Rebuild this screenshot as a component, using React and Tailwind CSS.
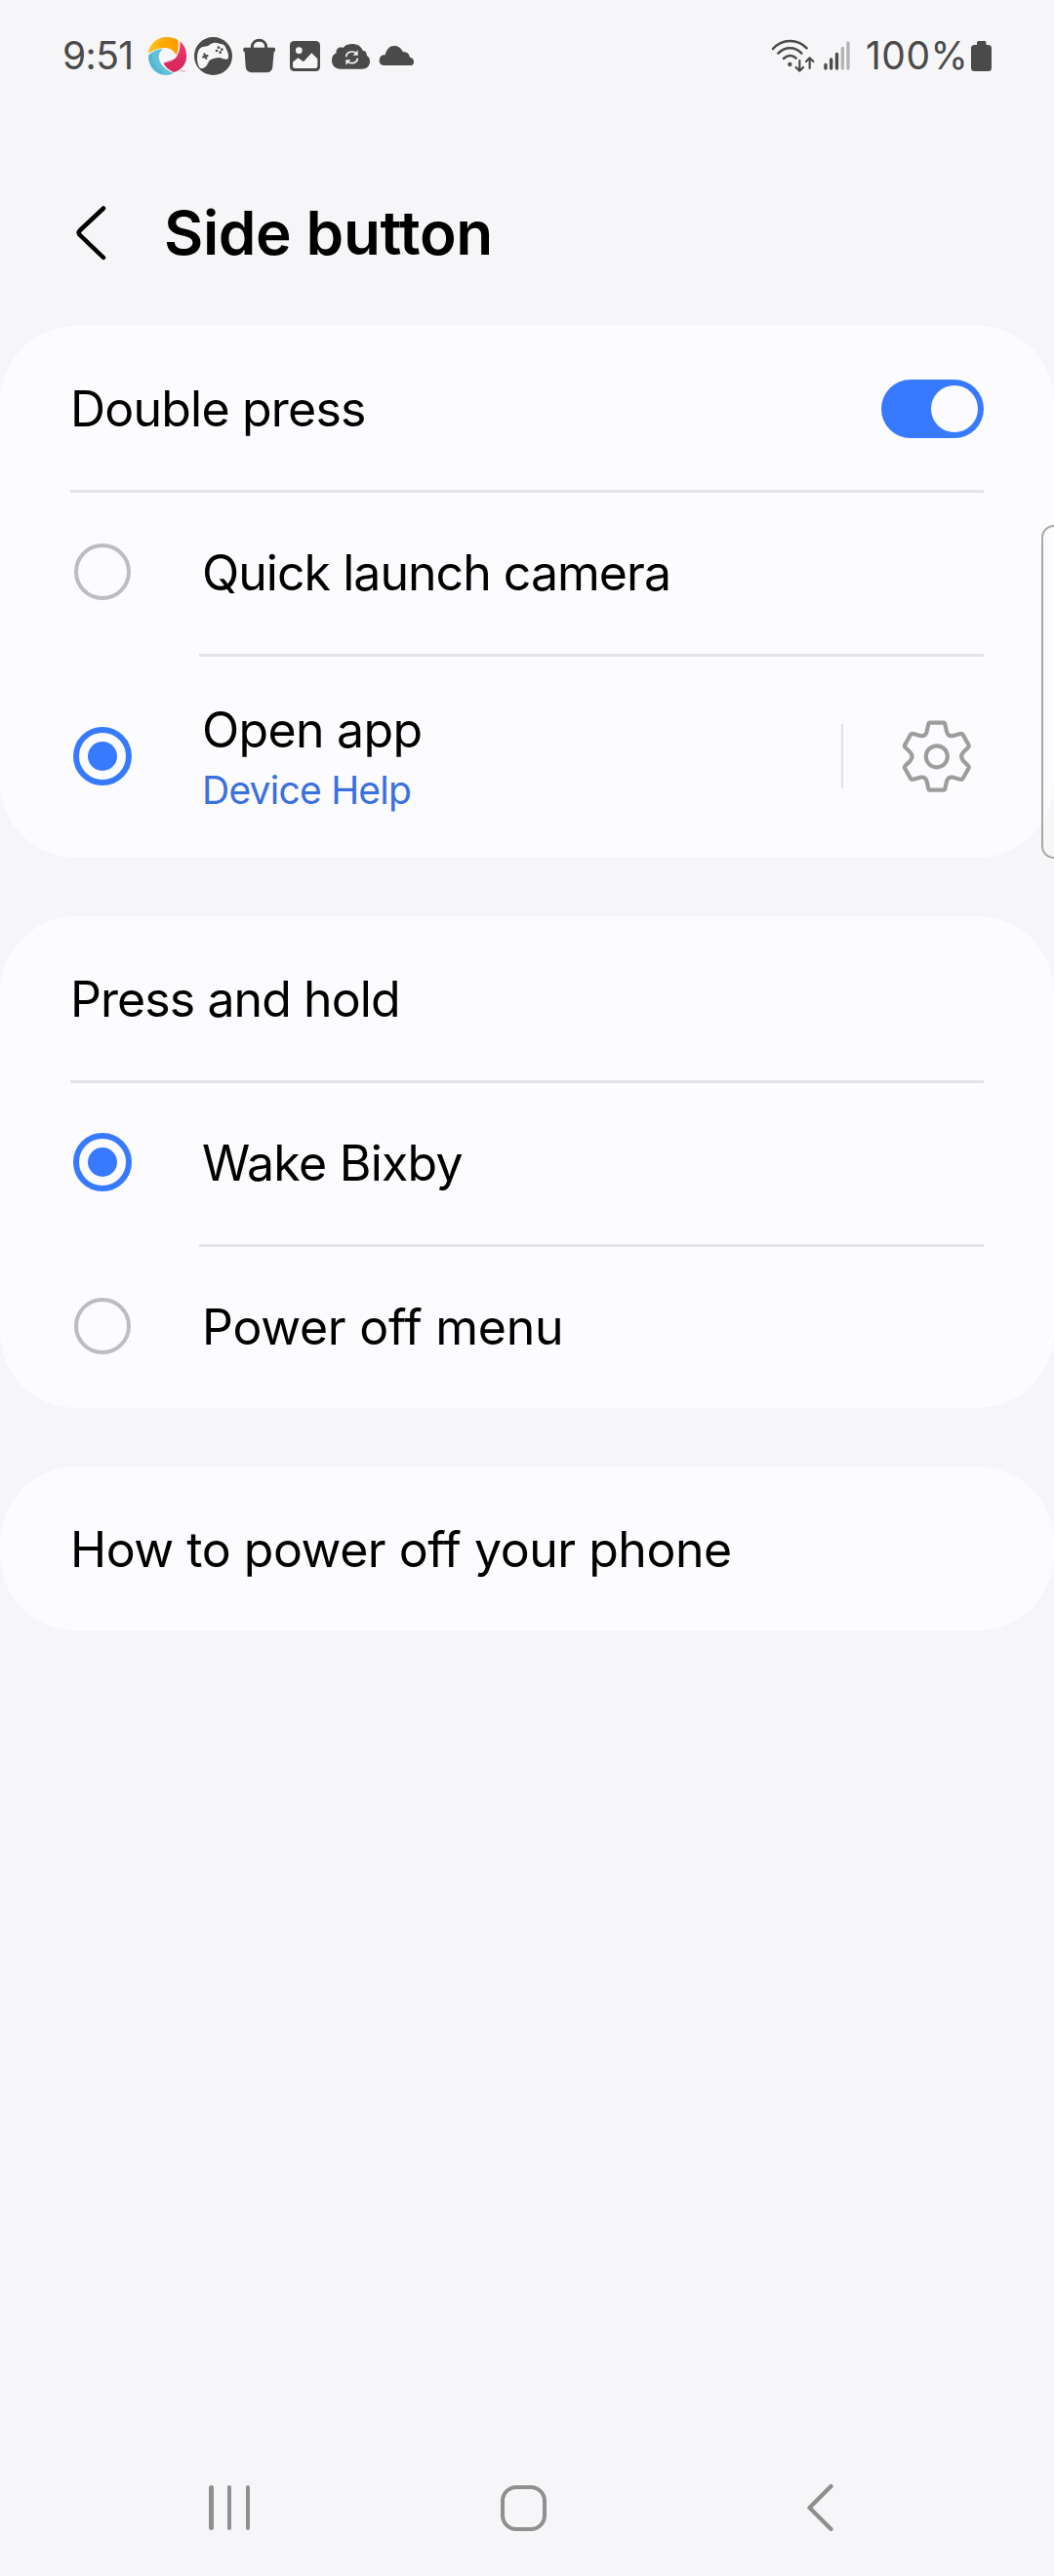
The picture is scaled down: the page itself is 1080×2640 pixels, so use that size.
import React from "react";

function SwirlLogo() {
  return (
    <svg className="ml-[17px] h-[39px] w-[39px] shrink-0" viewBox="306 54 117 117">
      <defs>
        <linearGradient id="amber" x1="0" x2="1">
          <stop offset="0.2" stopColor="#fcbc14" />
          <stop offset="1" stopColor="#fb9400" />
        </linearGradient>
        <linearGradient id="rose" x1="0" y1="0" x2="0.2" y2="1">
          <stop offset="0.2" stopColor="#f2386f" />
          <stop offset="1" stopColor="#d62a5c" />
        </linearGradient>
      </defs>
      <path d="M306 104 C309 74 334 54 362 54 C376 54 388 57 397 63 C400 78 398 95 392 109 C385 95 372 87 357 87 C340 88 322 93 306 104 Z" fill="url(#amber)" />
      <path d="M330 76 C350 66 376 68 396 84 C396 94 394 102 392 109 C385 95 372 87 357 87 C346 88 338 84 330 76 Z" fill="#ffa400" opacity="0.55" />
      <path d="M403 67 C417 78 424 95 423 115 C422 138 407 156 385 162 C371 156 358 146 353 134 C370 132 386 126 394 112 C401 101 405 84 403 67 Z" fill="url(#rose)" />
      <path d="M353 134 C372 122 388 124 423 112 C424 138 407 156 385 162 C371 156 358 146 353 134 Z" fill="#d8285c" opacity="0.4" />
      <path d="M306 112 C318 98 334 91 351 91 C339 99 335 114 341 128 C348 144 364 157 384 165 C378 169 369 171 361 171 C330 170 307 145 306 112 Z" fill="#62c1da" />
      <path d="M318 102 C316 130 330 150 352 162 C352 166 350 169 348 170 C322 164 306 142 306 112 Z" fill="#46b0cd" opacity="0.6" />
      <path d="M405 157 h5 M413 157 l2 4 l2 -4" stroke="#f2386f" strokeWidth="2" fill="none" />
    </svg>
  );
}

function GameIcon() {
  return (
    <svg className="ml-[8px] h-[39px] w-[39px] shrink-0" viewBox="447 54 117 117">
      <circle cx="505.500" cy="112.500" r="58.500" fill="#4a4a4a" />
      <path d="M468 151 C455 145 452 108 462 92 C468 83 480 83 490 81 C498 73 512 68 524 74 C536 75 542 79 545 89 C550 98 555 112 551 120 C544 127 532 117 522 117 C510 118 500 121 493 127 C488 138 482 151 468 151 Z" fill="#f6f6f8" />
      <path d="M477 104 L485 122 M472 116 L490 110" stroke="#4a4a4a" strokeWidth="6.500" />
      <g fill="#4a4a4a">
        <circle cx="522" cy="86" r="4" />
        <circle cx="532" cy="92" r="4" />
        <circle cx="516" cy="96" r="4" />
        <circle cx="527" cy="101" r="4" />
      </g>
    </svg>
  );
}

function BagIcon() {
  return (
    <svg className="ml-[11px] h-[36px] w-[34px] shrink-0" viewBox="597 58 102 108">
      <path d="M625 94 V86 C625 58 668 58 668 86 V94" fill="none" stroke="#4a4a4a" strokeWidth="9" />
      <path d="M602 87 H692 Q696 87 696 91 V97 Q696 100 692 101 L688 146 C687 159 680 164 668 164 H626 C614 164 606 159 605 146 L602 101 Q598 100 598 97 V91 Q598 87 602 87 Z" fill="#4a4a4a" />
    </svg>
  );
}

function PictureIcon() {
  return (
    <svg className="ml-[14px] h-[31px] w-[31px] shrink-0" viewBox="741 66 93 93">
      <rect x="741" y="66" width="93" height="93" rx="13" fill="#4a4a4a" />
      <circle cx="769" cy="95" r="10" fill="#f6f6f8" />
      <path d="M750 131 L766 118 L783 130 L808 103 L826 121 V144 Q826 150 819 150 H757 Q750 150 750 144 Z" fill="#f6f6f8" />
    </svg>
  );
}

function CloudSyncIcon() {
  return (
    <svg className="ml-[12px] h-[27px] w-[39px] shrink-0" viewBox="870 70 117 81">
      <path d="M897 150 C880 150 870 139 870 124 C870 111 877 104 884 101 C881 89 893 80 905 85 C915 69 955 66 965 93 C974 94 978 100 977 108 C984 112 987 118 987 126 C987 141 977 150 963 150 Z" fill="#4a4a4a" />
      <path d="M914 113 C914 99 930 93 943 100 M949 117 C949 130 933 136 920 129" fill="none" stroke="#f6f6f8" strokeWidth="5" />
      <path d="M950 92 V108 H935 Z M913 138 V122 H928 Z" fill="#f6f6f8" />
    </svg>
  );
}

function CloudIcon() {
  return (
    <svg className="ml-[9px] h-[20px] w-[37px] shrink-0" viewBox="1014 78 111 60">
      <path d="M1030 138 C1020 138 1015 130 1016 121 C1017 111 1024 105 1034 106 C1038 88 1048 78 1062 78 C1075 78 1084 86 1089 97 C1101 96 1108 103 1110 113 C1119 115 1123 120 1122 128 C1122 135 1117 138 1111 138 Z" fill="#4a4a4a" />
    </svg>
  );
}

function WifiIcon() {
  return (
    <svg className="h-[34px] w-[45px] shrink-0" viewBox="60 58 135 102" fill="none" stroke="#4a4a4a" strokeLinecap="round">
      <path d="M66 88 C94 56 142 56 170 86" strokeWidth="7.500" />
      <path d="M82 102 C103 80 134 80 154 102" strokeWidth="7.500" />
      <path d="M99 118 C110 107 126 106 137 117" strokeWidth="7.500" />
      <circle cx="118" cy="136" r="6.500" fill="#4a4a4a" stroke="none" />
      <path d="M148 124 V154 M137 145 L148 156 L159 145" strokeWidth="6.500" strokeLinejoin="round" />
      <path d="M179 148 V118 M168 127 L179 116 L190 127" strokeWidth="6.500" strokeLinejoin="round" />
    </svg>
  );
}

function SignalIcon() {
  return (
    <svg className="ml-[9px] h-[30px] w-[27px] shrink-0" viewBox="222 64 81 90" strokeWidth="10" strokeLinecap="round">
      <path d="M228 137 V148 M245 121 V148 M262.500 104 V148" stroke="#4a4a4a" />
      <path d="M280 86 V148 M297 70 V148" stroke="#b4b4b6" />
    </svg>
  );
}

function BatteryIcon() {
  return (
    <svg className="h-[31px] w-[21px] shrink-0" viewBox="0 0 21 31" fill="#4a4a4a">
      <rect x="6" y="0" width="9.500" height="8" rx="1.500" />
      <rect x="0" y="4" width="21" height="27" rx="3.500" />
    </svg>
  );
}

function StatusBar() {
  return (
    <div className="flex h-[114px] items-center justify-between pr-[64px] pl-[64px] text-[#4a4a4a]">
      <div className="flex items-center">
        <span className="w-[71px] text-[39px] leading-[48px] tracking-[-0.6px]">9:51</span>
        <SwirlLogo />
        <GameIcon />
        <BagIcon />
        <PictureIcon />
        <CloudSyncIcon />
        <CloudIcon />
      </div>
      <div className="flex items-center">
        <WifiIcon />
        <SignalIcon />
        <span className="ml-[16px] w-[108px] text-[39px] leading-[48px] tracking-[0.47px]">100%</span>
        <BatteryIcon />
      </div>
    </div>
  );
}

function Header() {
  return (
    <header className="flex h-[220px] items-center pt-[29px] pl-[76px]">
      <svg className="h-[56px] w-[34px] shrink-0" viewBox="0 0 34 56" fill="none" stroke="#000" strokeWidth="4.500" strokeLinecap="round" strokeLinejoin="round">
        <path d="M30 2.500 L6 25 Q3.500 27.500 6 30 L30 53" />
      </svg>
      <h1 className="ml-[58px] text-[62px] leading-[76px] font-semibold tracking-[-0.38px]">Side button</h1>
    </header>
  );
}

function Card({ children }) {
  return <section className="rounded-[78px] bg-[#fcfcff]">{children}</section>;
}

function Divider({ inset }) {
  return <div className={inset ? "mr-[72px] -mb-[3px] ml-[204px] h-[3px] bg-[#e4e4e6]" : "mx-[72px] -mb-[3px] h-[3px] bg-[#e4e4e6]"} />;
}

function Radio({ checked }) {
  return (
    <div className="flex w-[66px] shrink-0 justify-center">
      {checked ? (
        <div className="flex h-[60px] w-[60px] items-center justify-center rounded-full border-[6px] border-[#387aff]">
          <div className="h-[30px] w-[30px] rounded-full bg-[#387aff]" />
        </div>
      ) : (
        <div className="h-[58px] w-[58px] rounded-full border-4 border-[#bdbdc1]" />
      )}
    </div>
  );
}

function Label({ className, children }) {
  return <span className={"pt-[2px] text-[50px] leading-[60px] whitespace-nowrap " + className}>{children}</span>;
}

function Row({ children }) {
  return <div className="flex h-[168px] items-center px-[72px]">{children}</div>;
}

function Switch() {
  return (
    <div className="mt-[1px] ml-auto flex h-[60px] w-[105px] items-center justify-end rounded-full bg-[#387aff] px-[6px]">
      <div className="h-[48px] w-[48px] rounded-full bg-[#fcfcff]" />
    </div>
  );
}

function GearIcon() {
  return (
    <svg className="mt-[2px] ml-[59px] h-[77px] w-[74px] shrink-0" viewBox="429 231 222 231" fill="none" stroke="#9d9d9d" strokeWidth="12.500" strokeLinejoin="round">
      <path d="M519 242 H560 Q564 242 565 246 L570 269 Q574 285 590 282 L612 276 Q617 275 620 279 L637 309 Q640 314 636 318 L621 333 Q610 346 621 359 L636 374 Q640 378 637 383 L620 413 Q617 418 612 416 L590 410 Q574 407 570 422 L565 445 Q564 449 560 449 H519 Q515 449 514 445 L509 422 Q505 407 489 410 L467 416 Q462 418 459 413 L442 383 Q439 378 443 374 L458 359 Q469 346 458 333 L443 318 Q439 314 442 309 L459 279 Q462 275 467 276 L489 282 Q505 285 509 269 L514 246 Q515 242 519 242 Z" />
      <circle cx="539.500" cy="346" r="33" />
    </svg>
  );
}

function NavBar() {
  return (
    <nav className="mt-auto flex h-[140px] items-center pl-[214px]">
      <div className="flex w-[42px] justify-between">
        <div className="h-[46px] w-[4.500px] rounded-full bg-[#8f8f8f]" />
        <div className="h-[46px] w-[4.500px] rounded-full bg-[#8f8f8f]" />
        <div className="h-[46px] w-[4.500px] rounded-full bg-[#8f8f8f]" />
      </div>
      <div className="ml-[257px] h-[47px] w-[47px] rounded-[16px] border-[4.500px] border-[#8f8f8f]" />
      <svg className="ml-[265px] h-[50px] w-[32px]" viewBox="0 0 32 50" fill="none" stroke="#8f8f8f" strokeWidth="4.300" strokeLinecap="round" strokeLinejoin="round">
        <path d="M26.500 3 L4.500 25 L26.500 47" />
      </svg>
    </nav>
  );
}

export default function App() {
  return (
    <div className="relative flex h-[2640px] w-[1080px] flex-col overflow-hidden bg-[#f6f6f8] font-['Inter',sans-serif] text-black">
      <StatusBar />
      <Header />
      <main className="flex flex-col gap-[60px]">
        <Card>
          <Row>
            <Label className="tracking-[-0.79px]">Double press</Label>
            <Switch />
          </Row>
          <Divider />
          <Row>
            <Radio />
            <Label className="ml-[69px] tracking-[-0.97px]">Quick launch camera</Label>
          </Row>
          <Divider inset />
          <div className="flex h-[209px] items-center px-[72px]">
            <Radio checked />
            <div className="ml-[69px] flex flex-col">
              <Label className="tracking-[-0.7px]">Open app</Label>
              <span className="mt-[8px] text-[39px] leading-[48px] tracking-[-0.76px] text-[#3a70e0]">Device Help</span>
            </div>
            <div className="ml-auto h-[66px] w-[2px] bg-[#e2e2e4]" />
            <GearIcon />
            <div className="w-[11px]" />
          </div>
        </Card>
        <Card>
          <Row>
            <Label className="tracking-[-0.92px]">Press and hold</Label>
          </Row>
          <Divider />
          <Row>
            <Radio checked />
            <Label className="ml-[69px] tracking-[-0.73px]">Wake Bixby</Label>
          </Row>
          <Divider inset />
          <Row>
            <Radio />
            <Label className="ml-[69px] tracking-[-0.26px]">Power off menu</Label>
          </Row>
        </Card>
        <Card>
          <Row>
            <Label className="tracking-[-0.47px]">How to power off your phone</Label>
          </Row>
        </Card>
      </main>
      <NavBar />
      <div className="absolute top-[538px] -right-[17px] h-[342px] w-[30px] rounded-[13px] border-[2.500px] border-[#a8a8a8] bg-white/20" />
    </div>
  );
}
